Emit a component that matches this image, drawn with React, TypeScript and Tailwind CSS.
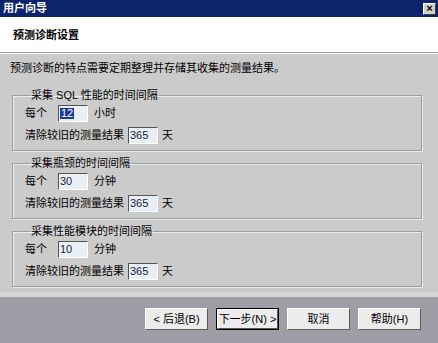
export default function App() {
  const font = { fontFamily: '"Liberation Sans", "Noto Sans CJK SC", sans-serif' };

  const groups = [
    { title: "采集 SQL 性能的时间间隔", every: "12", unit: "小时", selected: true },
    { title: "采集瓶颈的时间间隔", every: "30", unit: "分钟", selected: false },
    { title: "采集性能模块的时间间隔", every: "10", unit: "分钟", selected: false },
  ];

  return (
    <div className="w-[438px] h-[343px] flex flex-col overflow-hidden text-[11px] text-black" style={font}>
      {/* title bar */}
      <div className="h-[17px] bg-[#0b246b] flex items-center justify-between pl-[3px] pr-[2px]">
        <span className="text-white font-bold text-[11px] leading-none">用户向导</span>
        <div className="w-[13px] h-[12px] bg-[#d4d0c8] border-t border-l border-white border-r border-b border-r-[#404040] border-b-[#404040] flex items-center justify-center text-[11px] font-bold leading-none">
          ×
        </div>
      </div>

      {/* header */}
      <div className="h-[36px] bg-white flex items-center pl-[13px] pt-[2px] border-b border-[#a0a0a0]">
        <span className="font-bold text-[11px]">预测诊断设置</span>
      </div>
      <div className="h-px bg-white" />

      {/* body */}
      <div className="flex-1 bg-[#cbcbcb] flex flex-col pt-[7px] pl-[10px]">
        <p className="leading-[15px]">预测诊断的特点需要定期整理并存储其收集的测量结果。</p>

        {groups.map((g, i) => (
          <fieldset
            key={g.title}
            className={`${i === 0 ? "mt-[12px]" : "mt-[5px]"} ml-[2px] w-[410px] border border-[#9c9c9c] shadow-[inset_1px_1px_0_#ececec,1px_1px_0_#ececec] pl-[12px] pb-[6px]`}
          >
            <legend className="ml-[5px] px-[1px] leading-[15px]">{g.title}</legend>
            <div className="mt-[2px] flex items-center h-[17px]">
              <span className="w-[33px]">每个</span>
              <Field value={g.every} selected={g.selected} />
              <span className="ml-[6px]">{g.unit}</span>
            </div>
            <div className="mt-[5px] flex items-center h-[17px]">
              <span>清除较旧的测量结果</span>
              <span className="ml-[4px]">
                <Field value="365" />
              </span>
              <span className="ml-[4px]">天</span>
            </div>
          </fieldset>
        ))}
      </div>
      <div className="h-[5px] bg-[#d6d6d6]" />

      {/* footer */}
      <div className="h-[46px] bg-[#9f9ea7] flex items-start justify-end gap-[8px] pr-[17px] pt-[11px]">
        <Btn label="< 后退(B)" />
        <Btn label="下一步(N) >" primary />
        <Btn label="取消" />
        <Btn label="帮助(H)" />
      </div>
    </div>
  );
}

function Field({ value, selected }: { value: string; selected?: boolean }) {
  return (
    <div className="w-[30px] h-[17px] bg-[#eaeff5] border-t border-l border-t-[#555] border-l-[#555] border-r border-b border-r-white border-b-white flex items-center pl-[1px] text-[11px] leading-none text-[#1a2040]">
      {selected ? <span className="bg-[#1c3a9a] text-white px-px">{value}</span> : <span>{value}</span>}
    </div>
  );
}

function Btn({ label, primary }: { label: string; primary?: boolean }) {
  return (
    <div className={`w-[63px] h-[22px] ${primary ? "border border-black" : ""}`}>
      <div className="w-full h-full bg-[#ececec] border-t border-l border-white border-r border-b border-r-[#5a5a5a] border-b-[#5a5a5a] flex items-center justify-center text-[11px] leading-none">
        {label}
      </div>
    </div>
  );
}
